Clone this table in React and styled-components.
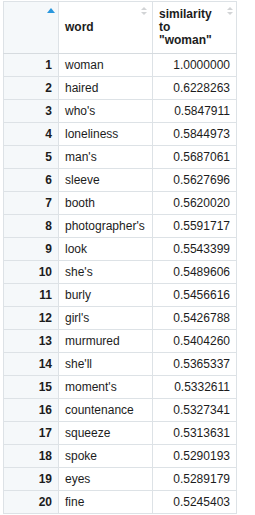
import React from "react";
import styled, { createGlobalStyle } from "styled-components";

const GlobalStyle = createGlobalStyle`
  html, body {
    margin: 0;
    padding: 0;
    background: #ffffff;
  }
  body {
    font-family: "Liberation Sans", Arial, sans-serif;
    font-size: 12px;
    color: #1c1c1c;
  }
`;

const rows = [
  ["woman", "1.0000000"],
  ["haired", "0.6228263"],
  ["who's", "0.5847911"],
  ["loneliness", "0.5844973"],
  ["man's", "0.5687061"],
  ["sleeve", "0.5627696"],
  ["booth", "0.5620020"],
  ["photographer's", "0.5591717"],
  ["look", "0.5543399"],
  ["she's", "0.5489606"],
  ["burly", "0.5456616"],
  ["girl's", "0.5426788"],
  ["murmured", "0.5404260"],
  ["she'll", "0.5365337"],
  ["moment's", "0.5332611"],
  ["countenance", "0.5327341"],
  ["squeeze", "0.5313631"],
  ["spoke", "0.5290193"],
  ["eyes", "0.5289179"],
  ["fine", "0.5245403"],
];

const Page = styled.div`
  padding: 1px 0 0 3px;
`;

const Table = styled.table`
  border-collapse: collapse;
  table-layout: fixed;
  width: 234px;
`;

const Th = styled.th`
  position: relative;
  height: 52px;
  padding: 0 6px;
  border: 1px solid #dde2e6;
  border-bottom-color: #d6dbdf;
  background: ${(p) => (p.$index ? "#f5f8fa" : "#ffffff")};
  text-align: left;
  vertical-align: middle;
  font-weight: bold;
  line-height: 13px;
  box-sizing: border-box;
`;

const Td = styled.td`
  height: 23px;
  padding: 0 6px;
  border: 1px solid #dde2e6;
  background: ${(p) => (p.$index ? "#f5f8fa" : "#ffffff")};
  text-align: ${(p) => (p.$right ? "right" : "left")};
  font-weight: ${(p) => (p.$index ? "bold" : "normal")};
  line-height: 22px;
  white-space: nowrap;
  box-sizing: border-box;
`;

const SortIcon = styled.svg`
  position: absolute;
  top: ${(p) => (p.$active ? "6px" : "5px")};
  right: ${(p) => p.$right}px;
`;

function Sort({ active, right }) {
  if (active) {
    return (
      <SortIcon $active width="8" height="5" viewBox="0 0 8 5" $right={right}>
        <polygon points="4,0 8,5 0,5" fill="#2a97dd" />
      </SortIcon>
    );
  }
  return (
    <SortIcon width="6" height="9" viewBox="0 0 6 9" $right={right}>
      <polygon points="3,0 6,3 0,3" fill="#d2d4d6" />
      <polygon points="0,5 6,5 3,8" fill="#d2d4d6" />
    </SortIcon>
  );
}

export default function App() {
  return (
    <Page>
      <GlobalStyle />
      <Table>
        <colgroup>
          <col style={{ width: 55 }} />
          <col style={{ width: 94 }} />
          <col style={{ width: 84 }} />
        </colgroup>
        <thead>
          <tr>
            <Th $index>
              <Sort active right={3} />
            </Th>
            <Th>
              word
              <Sort right={5} />
            </Th>
            <Th>
              similarity
              <br />
              to
              <br />
              "woman"
              <Sort right={3} />
            </Th>
          </tr>
        </thead>
        <tbody>
          {rows.map(([word, value], i) => (
            <tr key={word}>
              <Td $index $right>
                {i + 1}
              </Td>
              <Td>{word}</Td>
              <Td $right>{value}</Td>
            </tr>
          ))}
        </tbody>
      </Table>
    </Page>
  );
}
